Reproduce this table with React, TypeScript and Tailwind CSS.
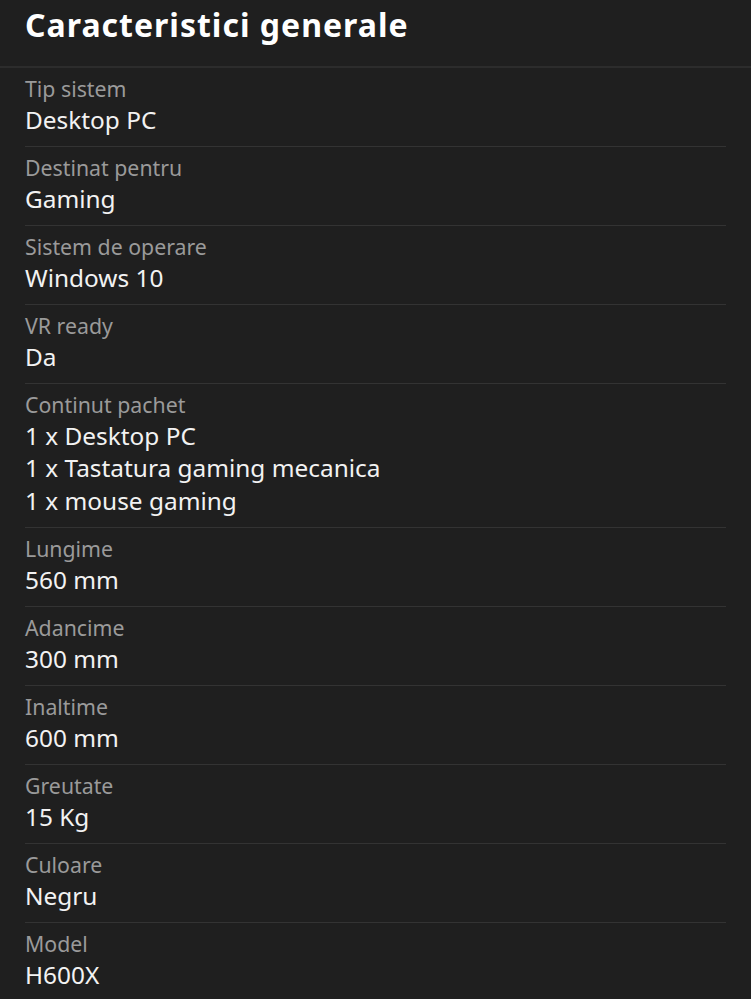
const specs: { label: string; values: string[] }[] = [
  { label: "Tip sistem", values: ["Desktop PC"] },
  { label: "Destinat pentru", values: ["Gaming"] },
  { label: "Sistem de operare", values: ["Windows 10"] },
  { label: "VR ready", values: ["Da"] },
  {
    label: "Continut pachet",
    values: ["1 x Desktop PC", "1 x Tastatura gaming mecanica", "1 x mouse gaming"],
  },
  { label: "Lungime", values: ["560 mm"] },
  { label: "Adancime", values: ["300 mm"] },
  { label: "Inaltime", values: ["600 mm"] },
  { label: "Greutate", values: ["15 Kg"] },
  { label: "Culoare", values: ["Negru"] },
  { label: "Model", values: ["H600X"] },
];

export default function App() {
  return (
    <div className="min-h-[999px] w-[751px] overflow-hidden bg-[#1f1f1f] font-['Noto_Sans',sans-serif]">
      <div className="border-b-2 border-[#2c2c2c] px-[25px] pb-[19px] pt-[3px]">
        <h1 className="text-[32px] font-bold leading-[44px] tracking-[1px] text-white">
          Caracteristici generale
        </h1>
      </div>
      <div className="px-[25px]">
        {specs.map((s, i) => (
          <div
            key={s.label}
            className={`pb-[10px] pt-[7px] ${i < specs.length - 1 ? "border-b border-[#333333]" : ""}`}
          >
            <div className="text-[21.3px] leading-[28.5px] text-[#9a9a9a]">{s.label}</div>
            {s.values.map((v) => (
              <div key={v} className="text-[24.4px] leading-[32.5px] text-[#f2f2f2]">
                {v}
              </div>
            ))}
          </div>
        ))}
      </div>
    </div>
  );
}
